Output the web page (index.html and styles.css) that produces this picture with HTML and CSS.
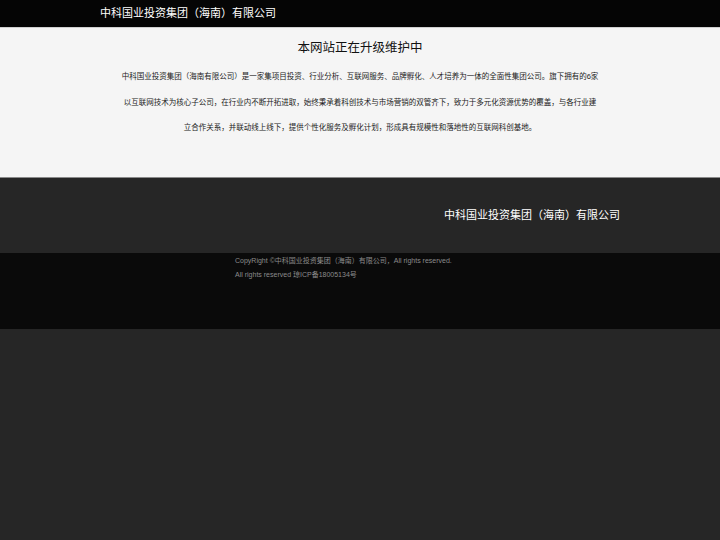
FILE: index.html
```html
<!DOCTYPE html>
<html lang="zh-CN">
<head>
<meta charset="utf-8">
<title>中科国业投资集团（海南）有限公司</title>
<link rel="stylesheet" href="styles.css">
</head>
<body>
<header class="topbar">
  <div class="brand">中科国业投资集团（海南）有限公司</div>
</header>
<main class="notice">
  <h1 class="notice-title">本网站正在升级维护中</h1>
  <p class="notice-text">中科国业投资集团（海南有限公司）是一家集项目投资、行业分析、互联网服务、品牌孵化、人才培养为一体的全面性集团公司。旗下拥有的6家以互联网技术为核心子公司，在行业内不断开拓进取，始终秉承着科创技术与市场营销的双管齐下，致力于多元化资源优势的覆盖，与各行业建立合作关系，并联动线上线下，提供个性化服务及孵化计划，形成具有规模性和落地性的互联网科创基地。</p>
</main>
<footer class="footer">
  <div class="footer-top">
    <div class="footer-name">中科国业投资集团（海南）有限公司</div>
  </div>
  <div class="footer-bottom">
    <p class="copy">CopyRight ©中科国业投资集团（海南）有限公司，All rights reserved.</p>
    <p class="copy">All rights reserved 琼ICP备18005134号</p>
  </div>
</footer>
</body>
</html>
```
FILE: styles.css
```css
html, body {
  margin: 0;
  padding: 0;
}
body {
  background: #262626;
  font-family: "Liberation Sans", "Noto Sans CJK SC", sans-serif;
}
.topbar {
  background: #050505;
  height: 27px;
  border-bottom: 1px solid #d0d0d0;
  box-sizing: content-box;
}
.brand {
  padding-left: 100px;
  color: #fff;
  font-size: 11px;
  line-height: 27px;
}
.notice {
  display: block;
  background: #f5f5f5;
  height: 150px;
  box-sizing: border-box;
  padding-top: 10px;
  border-bottom: 1px solid #8a8a8a;
}
.notice-title {
  margin: 0;
  text-align: center;
  font-size: 12.5px;
  line-height: 20px;
  font-weight: normal;
  color: #111;
}
.notice-text {
  width: 478px;
  margin: 6px auto 0;
  text-align: center;
  font-size: 7.5px;
  line-height: 25.5px;
  color: #222;
}
.footer-top {
  background: #262626;
  height: 75px;
  box-sizing: border-box;
  padding-top: 30px;
  padding-right: 100px;
  text-align: right;
}
.footer-name {
  color: #fff;
  font-size: 11px;
  line-height: 14px;
}
.footer-bottom {
  background: #0a0a0a;
  height: 76px;
  box-sizing: border-box;
  padding: 1px 0 0 235px;
}
.copy {
  margin: 0;
  color: #8a8a8a;
  font-size: 7px;
  line-height: 14px;
}
```
